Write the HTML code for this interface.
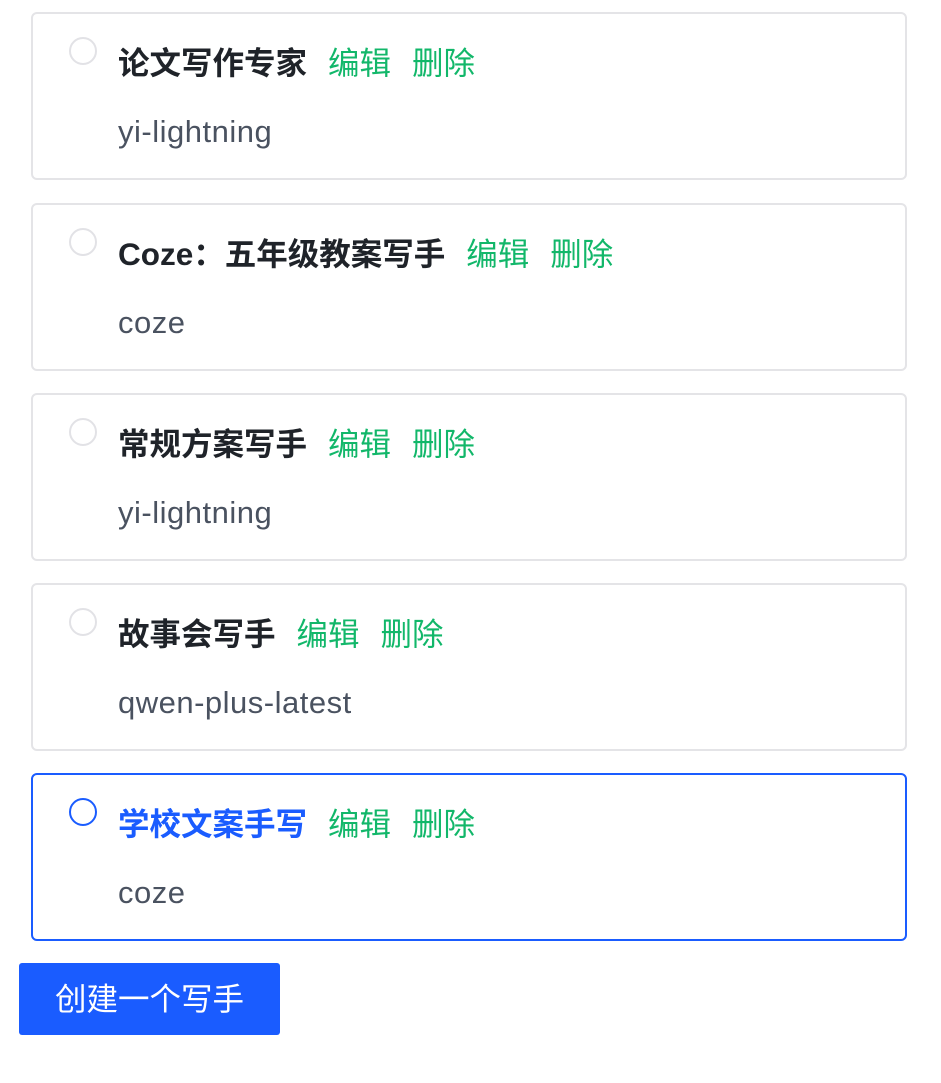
<!DOCTYPE html>
<html><head><meta charset="utf-8"><style>
body{margin:0;width:941px;height:1083px;background:#fff;font-family:"Liberation Sans","Noto Sans CJK SC",sans-serif;position:relative;overflow:hidden}
.card{position:absolute;left:31px;width:872px;height:164px;border:2px solid #e4e4e7;border-radius:6px;background:#fff}
.card.sel{border-color:#1a5cff}
.radio{position:absolute;left:36px;top:23px;width:28px;height:28px;border:2px solid #e2e2e6;border-radius:50%;box-sizing:border-box}
.sel .radio{border-color:#1a5cff}
.title{position:absolute;left:85px;top:29px;font-size:31.5px;line-height:40px;white-space:nowrap;color:#1f2329}
.title b{font-weight:700}
.sel .title b{color:#1a5cff}
.title span{color:#12b76a;margin-left:21px;font-weight:400}
.sub{position:absolute;left:85px;top:98px;font-size:31px;letter-spacing:0.5px;line-height:40px;color:#4a5260}
.btn{position:absolute;left:19px;top:963px;width:261px;height:72px;background:#1a5cff;border-radius:3px;color:#fff;font-size:31.5px;line-height:72px;text-align:center}
</style></head><body>
<div class="card" style="top:12px"><div class="radio"></div><div class="title"><b>论文写作专家</b><span>编辑</span><span>删除</span></div><div class="sub">yi-lightning</div></div>
<div class="card" style="top:203px"><div class="radio"></div><div class="title"><b>Coze：五年级教案写手</b><span>编辑</span><span>删除</span></div><div class="sub">coze</div></div>
<div class="card" style="top:393px"><div class="radio"></div><div class="title"><b>常规方案写手</b><span>编辑</span><span>删除</span></div><div class="sub">yi-lightning</div></div>
<div class="card" style="top:583px"><div class="radio"></div><div class="title"><b>故事会写手</b><span>编辑</span><span>删除</span></div><div class="sub">qwen-plus-latest</div></div>
<div class="card sel" style="top:773px"><div class="radio"></div><div class="title"><b>学校文案手写</b><span>编辑</span><span>删除</span></div><div class="sub">coze</div></div>
<div class="btn">创建一个写手</div>
</body></html>
